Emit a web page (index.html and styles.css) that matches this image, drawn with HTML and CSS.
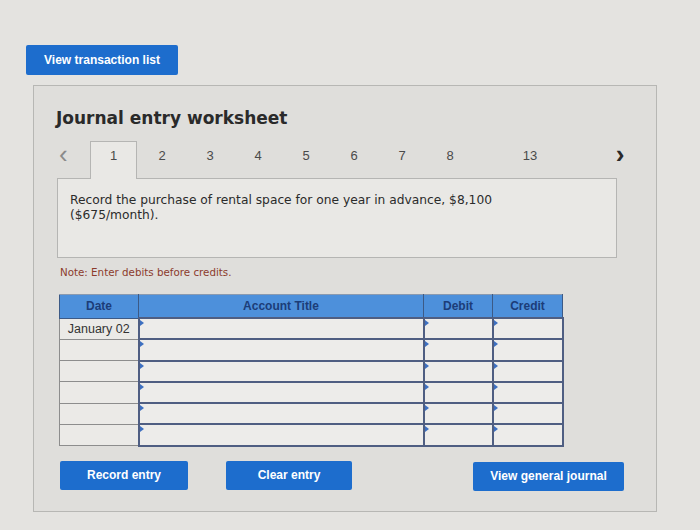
FILE: index.html
```html
<!DOCTYPE html>
<html>
<head>
<meta charset="utf-8">
<link rel="stylesheet" href="styles.css">
</head>
<body>
<div class="page">
  <button class="btn btn-top">View transaction list</button>
  <section class="panel">
    <h1 class="title">Journal entry worksheet</h1>
    <div class="tabs">
      <span class="arrow prev">&lsaquo;</span>
      <span class="tab active">1</span>
      <span class="tab">2</span>
      <span class="tab">3</span>
      <span class="tab">4</span>
      <span class="tab">5</span>
      <span class="tab">6</span>
      <span class="tab">7</span>
      <span class="tab">8</span>
      <span class="tab tab-last">13</span>
      <span class="arrow next">&rsaquo;</span>
    </div>
    <div class="question">
      <p class="qtext">Record the purchase of rental space for one year in advance, $8,100 ($675/month).</p>
    </div>
    <p class="note">Note: Enter debits before credits.</p>
    <table class="journal">
      <thead>
        <tr>
          <th class="c-date">Date</th>
          <th class="c-acct">Account Title</th>
          <th class="c-num">Debit</th>
          <th class="c-num2">Credit</th>
        </tr>
      </thead>
      <tbody>
        <tr><td class="date">January 02</td><td class="inp"></td><td class="inp"></td><td class="inp"></td></tr>
        <tr><td class="date"></td><td class="inp"></td><td class="inp"></td><td class="inp"></td></tr>
        <tr><td class="date"></td><td class="inp"></td><td class="inp"></td><td class="inp"></td></tr>
        <tr><td class="date"></td><td class="inp"></td><td class="inp"></td><td class="inp"></td></tr>
        <tr><td class="date"></td><td class="inp"></td><td class="inp"></td><td class="inp"></td></tr>
        <tr><td class="date"></td><td class="inp"></td><td class="inp"></td><td class="inp"></td></tr>
      </tbody>
    </table>
    <div class="actions">
      <button class="btn btn-record">Record entry</button>
      <button class="btn btn-clear">Clear entry</button>
      <button class="btn btn-view">View general journal</button>
    </div>
  </section>
</div>
</body>
</html>
```

FILE: styles.css
```css
html, body {
  margin: 0;
  padding: 0;
  background: #e4e3e0;
}
.page {
  padding: 45px 0 0 26px;
  font-family: "DejaVu Sans", Verdana, sans-serif;
}
.btn {
  display: flex;
  align-items: center;
  justify-content: center;
  border: none;
  border-radius: 2px;
  background: #1d6dcd;
  color: #ffffff;
  font-family: "Liberation Sans", Arial, sans-serif;
  font-weight: bold;
  font-size: 12px;
  padding: 0;
  height: 30px;
}
.btn-top {
  width: 152px;
}
.panel {
  box-sizing: border-box;
  width: 624px;
  height: 427px;
  margin: 10px 0 0 7px;
  border: 1px solid #b7b7b4;
  background: #dfdedb;
  padding: 20px 0 0 23px;
}
.title {
  margin: 0 0 0 -1px;
  font-family: "DejaVu Sans", Verdana, sans-serif;
  font-weight: bold;
  font-size: 17px;
  line-height: 24px;
  color: #2a2a2a;
}
.tabs {
  display: flex;
  align-items: stretch;
  height: 37px;
  margin-top: 11px;
  font-family: "Liberation Sans", Arial, sans-serif;
  font-size: 13px;
  color: #4a4a4a;
}
.arrow {
  display: flex;
  align-items: center;
  justify-content: center;
  font-size: 26px;
  line-height: 1;
  padding-bottom: 12px;
  box-sizing: border-box;
}
.prev {
  width: 33px;
  justify-content: flex-start;
  padding-left: 2px;
  color: #8a8a8a;
  font-weight: normal;
}
.next {
  width: 20px;
  margin-left: 56px;
  color: #2a2a2a;
  font-weight: bold;
}
.tab {
  width: 48px;
  display: flex;
  justify-content: center;
  padding-top: 7px;
  box-sizing: border-box;
}
.tab.active {
  background: #e9e8e5;
  border: 1px solid #b5b5b3;
  border-bottom: none;
  position: relative;
  z-index: 1;
  margin-bottom: -1px;
  width: 47px;
  margin-right: 1px;
  padding-top: 6px;
}
.tab-last {
  margin-left: 32px;
}
.question {
  box-sizing: border-box;
  width: 560px;
  height: 80px;
  border: 1px solid #b5b5b3;
  background: #e9e8e5;
  padding: 14px 12px 0 12px;
}
.qtext {
  margin: 0;
  max-width: 435px;
  font-size: 12.25px;
  line-height: 15px;
  color: #2b2b2b;
}
.note {
  margin: 8px 0 0 3px;
  font-size: 10.3px;
  line-height: 12px;
  color: #8c3b2c;
}
.journal {
  margin: 16px 0 0 2px;
  border-collapse: collapse;
  width: 499px;
  table-layout: fixed;
  font-family: "Liberation Sans", Arial, sans-serif;
}
.journal th {
  background: #4d90db;
  color: #1c3d78;
  font-size: 12px;
  font-weight: bold;
  height: 22px;
  padding: 0;
  border: 1px solid #3c5a86;
  border-top: 1px solid #8a9ab0;
}
.c-date { width: 78px; }
.c-acct { width: 284px; }
.c-num { width: 68px; }
.c-num2 { width: 69px; }
.journal td {
  height: 19.3px;
  padding: 0;
  background: #ebeae7;
}
.journal td.date {
  border: 1px solid #8d8d8d;
  font-size: 12.5px;
  color: #333333;
  text-align: center;
}
.journal td.inp {
  position: relative;
  border: 2px solid #4f5e82;
  background: #edecea;
}
.journal td.inp::before {
  content: "";
  position: absolute;
  left: 0;
  top: 1px;
  border-left: 4px solid #3d6fc0;
  border-top: 3px solid transparent;
  border-bottom: 3px solid transparent;
}
.actions {
  display: flex;
  margin: 14px 0 0 3px;
}
.btn-record {
  width: 128px;
  height: 29px;
}
.btn-clear {
  width: 126px;
  height: 29px;
  margin-left: 38px;
}
.btn-view {
  width: 151px;
  height: 29px;
  margin-left: 121px;
  margin-top: 1px;
}
```
